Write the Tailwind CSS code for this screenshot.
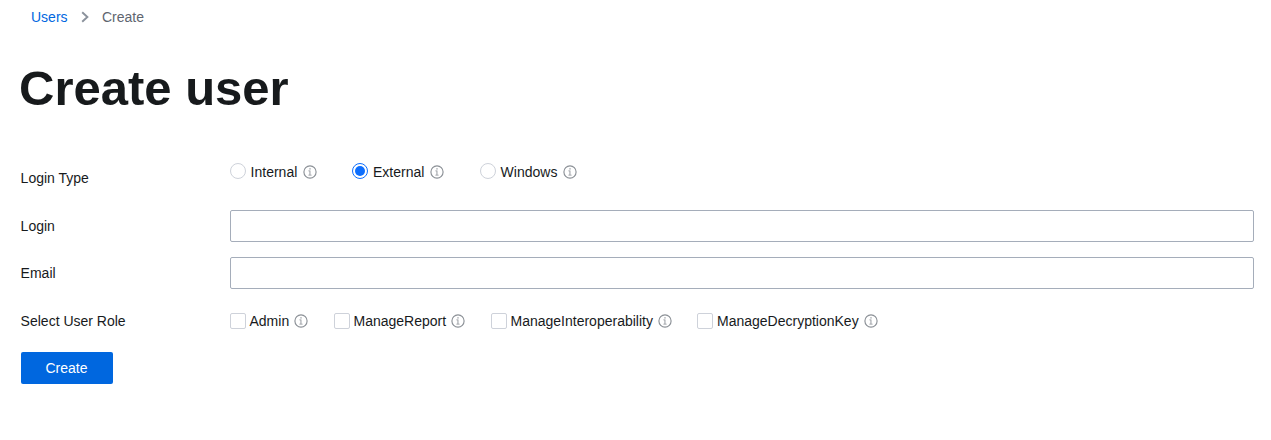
<!DOCTYPE html>
<html lang="en">
<head>
<meta charset="utf-8">
<title>Create user</title>
<script src="https://cdn.jsdelivr.net/npm/@tailwindcss/browser@4"></script>
</head>
<body class="bg-white font-['Liberation_Sans',Arial,sans-serif] text-sm leading-4 text-[#171a1c]">
<svg class="hidden">
  <symbol id="info" viewBox="0 0 14 14">
    <circle cx="7" cy="7" r="6.1" fill="none" stroke="#8b9096" stroke-width="1.15"/>
    <path d="M6.4 3.2h1.2v1.3H6.4zM5.4 5.6h2v4.2h1.2v.7H5.4v-.7h1.1V6.3H5.4z" fill="#8b9096"/>
  </symbol>
</svg>
<nav class="flex h-[34px] items-center pl-[31px]">
  <a class="w-[50px] text-[#0067df]">Users</a>
  <svg class="mr-[13px] h-3 w-2" viewBox="0 0 8 12" fill="none" stroke="#8b929c" stroke-width="1.9"><path d="M1.2 1.2 6.4 6 1.2 10.8"/></svg>
  <span class="text-[#60656f]">Create</span>
</nav>
<h1 class="mt-[26px] pl-[19px] text-[49px] leading-[56px] font-bold">Create user</h1>
<main class="pr-[17px] pl-[21px]">
  <div class="mt-[47px] flex h-4">
    <span class="-ml-[0.4px] w-[209.4px] pt-[7px]">Login Type</span>
    <label class="flex w-[122px] items-center"><span class="size-4 shrink-0 rounded-full border border-[#ced2da]"></span><span class="ml-[4.6px] pt-px">Internal</span><svg class="mt-0.5 ml-[5.6px] size-3.5"><use href="#info"/></svg></label>
    <label class="flex w-32 items-center"><span class="flex size-4 shrink-0 items-center justify-center rounded-full border border-[#0d6efd]"><span class="size-2.5 rounded-full bg-[#0d6efd]"></span></span><span class="ml-[5px] pt-px">External</span><svg class="mt-0.5 ml-[5.6px] size-3.5"><use href="#info"/></svg></label>
    <label class="flex items-center"><span class="size-4 shrink-0 rounded-full border border-[#ced2da]"></span><span class="ml-[4.6px] pt-px">Windows</span><svg class="mt-0.5 ml-[5.6px] size-3.5"><use href="#info"/></svg></label>
  </div>
  <label class="mt-[31px] flex items-center"><span class="-ml-[0.4px] w-[209.4px]">Login</span><input type="text" class="h-8 flex-1 rounded-xs border border-[#a5adba] px-2 outline-none"></label>
  <label class="mt-[15px] flex items-center"><span class="-ml-[0.4px] w-[209.4px]">Email</span><input type="text" class="h-8 flex-1 rounded-xs border border-[#a5adba] px-2 outline-none"></label>
  <div class="mt-6 flex h-4 items-center">
    <span class="-ml-[0.4px] w-[209.4px]">Select User Role</span>
    <label class="flex w-[104px] items-center"><span class="size-4 shrink-0 rounded-xs border border-[#ced2da]"></span><span class="ml-[3.5px]">Admin</span><svg class="ml-[4.6px] size-3.5"><use href="#info"/></svg></label>
    <label class="flex w-[157px] items-center"><span class="size-4 shrink-0 rounded-xs border border-[#ced2da]"></span><span class="ml-[3.5px]">ManageReport</span><svg class="ml-[4.6px] size-3.5"><use href="#info"/></svg></label>
    <label class="flex w-[206px] items-center"><span class="size-4 shrink-0 rounded-xs border border-[#ced2da]"></span><span class="ml-[3.5px]">ManageInteroperability</span><svg class="ml-[5px] size-3.5"><use href="#info"/></svg></label>
    <label class="flex items-center"><span class="size-4 shrink-0 rounded-xs border border-[#ced2da]"></span><span class="ml-1">ManageDecryptionKey</span><svg class="ml-[5.2px] size-3.5"><use href="#info"/></svg></label>
  </div>
  <button class="mt-[23px] block h-8 w-[92px] rounded-xs bg-[#0067df] pr-px text-white">Create</button>
</main>
</body>
</html>
